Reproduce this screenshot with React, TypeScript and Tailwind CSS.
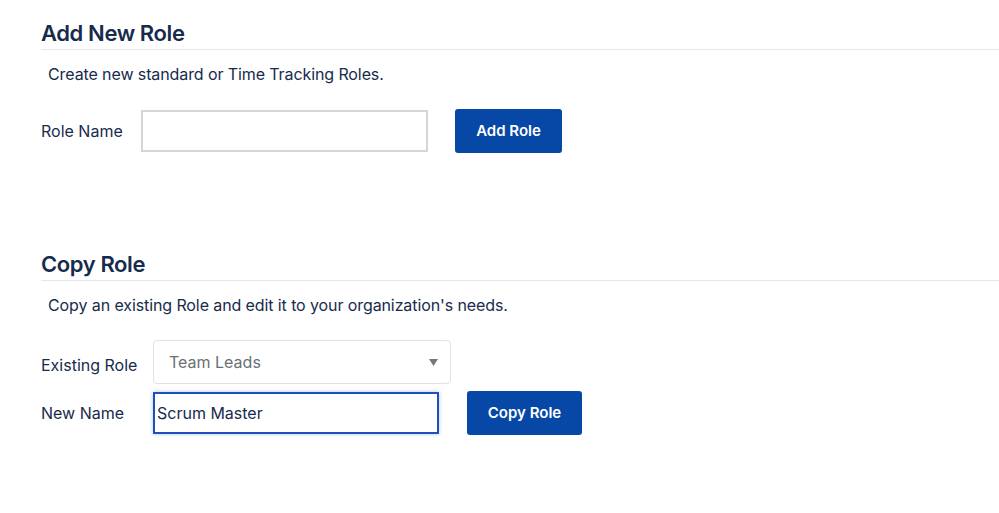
const font = { fontFamily: "Inter, 'Noto Sans', sans-serif" };

function Section({ title, children }: { title: string; children: React.ReactNode }) {
    return (
        <section>
            <h2 className="text-[22px] leading-[28px] font-semibold text-[#172b4d] pt-px pb-[2px] border-b border-[#e4e6ea] tracking-[-0.4px]">
                {title}
            </h2>
            {children}
        </section>
    );
}

export default function App() {
    return (
        <div className="min-h-[513px] bg-white pl-[41px] pt-[18px] text-[#172b4d]" style={font}>
            <Section title="Add New Role">
                <p className="mt-[14px] pl-[7px] text-[16px] leading-[20px] tracking-[-0.1px]">
                    Create new standard or Time Tracking Roles.
                </p>
                <div className="mt-[25px] flex items-center">
                    <label className="w-[100px] text-[16px]">Role Name</label>
                    <input
                        type="text"
                        className="h-[42px] w-[287px] border-2 border-[#d4d6d9] bg-white px-2 outline-none"
                    />
                    <button className="ml-[27px] h-[44px] w-[107px] rounded-[3px] bg-[#0747a6] text-[15px] font-semibold text-white">
                        Add Role
                    </button>
                </div>
            </Section>

            <div className="mt-[96px]">
                <Section title="Copy Role">
                    <p className="mt-[14px] pl-[7px] text-[16px] leading-[20px] tracking-[-0.1px]">
                        Copy an existing Role and edit it to your organization's needs.
                    </p>
                    <div className="mt-[25px] flex items-center">
                        <label className="w-[112px] pt-[6px] text-[16px]">Existing Role</label>
                        <div className="flex h-[44px] w-[298px] items-center justify-between rounded-[4px] border border-[#e1e3e6] bg-white pl-[15px] pr-[12px]">
                            <span className="text-[16px] text-[#6b6f76]">Team Leads</span>
                            <svg width="9" height="7" viewBox="0 0 9 7">
                                <path d="M0 0h9L4.5 7z" fill="#75797f" />
                            </svg>
                        </div>
                    </div>
                    <div className="mt-[7px] flex items-center">
                        <label className="w-[112px] text-[16px]">New Name</label>
                        <input
                            type="text"
                            defaultValue="Scrum Master"
                            className="h-[42px] w-[286px] border-2 border-[#1d4fbd] bg-white px-[2px] text-[16px] text-[#172b4d] outline-none shadow-[0_0_4px_rgba(29,79,189,0.35)]"
                        />
                        <button className="ml-[28px] h-[44px] w-[115px] rounded-[3px] bg-[#0747a6] text-[15px] font-semibold text-white">
                            Copy Role
                        </button>
                    </div>
                </Section>
            </div>
        </div>
    );
}
